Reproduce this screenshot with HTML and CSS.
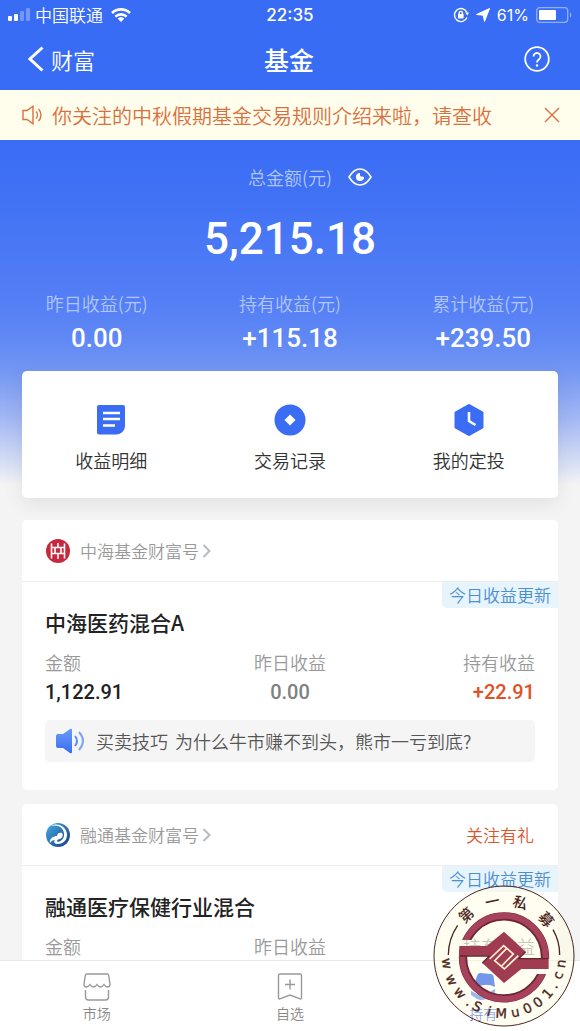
FILE: index.html
```html
<!DOCTYPE html>
<html lang="zh-CN">
<head>
    <meta charset="utf-8">
    <meta name="viewport" content="width=device-width, initial-scale=1">
    <title>基金</title>
    <link rel="stylesheet" href="styles.css">
</head>
<body>
    <div class="app">
        <header class="top">
            <div class="status-bar">
                <div class="status-left">
                    <svg class="signal" width="23" height="14" viewBox="0 0 23 14" fill="#fff">
                        <rect x="0" y="8" width="4" height="5" rx="1"/>
                        <rect x="6" y="6" width="4" height="7" rx="1"/>
                        <rect x="12" y="3" width="4" height="10" rx="1" opacity=".3"/>
                        <rect x="18" y="0" width="4" height="13" rx="1" opacity=".3"/>
                    </svg>
                    <span class="carrier">中国联通</span>
                    <svg width="20" height="14" viewBox="0 0 20 14" fill="none" stroke="#fff" stroke-width="2.6">
                        <path d="M1 5a13 13 0 0 1 18 0"/>
                        <path d="M4.300 8.600a8.300 8.300 0 0 1 11.400 0"/>
                        <path d="M10 14l-3.400-3.400a5 5 0 0 1 6.800 0z" fill="#fff" stroke="none"/>
                    </svg>
                </div>
                <span class="clock">22:35</span>
                <div class="status-right">
                    <svg width="16" height="16" viewBox="0 0 16 16" fill="none" stroke="#fff" stroke-width="1.400">
                        <path d="M13.800 5.200A6.500 6.500 0 1 0 14 10.500"/>
                        <path d="M12 5.500h4l-1.500 3z" fill="#fff" stroke="none"/>
                        <rect x="5" y="7" width="5.600" height="4.400" rx=".6" fill="#fff" stroke="none"/>
                        <path d="M6.200 7.200V6a1.600 1.600 0 0 1 3.200 0v1.200"/>
                    </svg>
                    <svg width="14" height="14" viewBox="0 0 14 14" fill="#fff">
                        <path d="M13.500.5L8.500 13.500 7.200 7.200.5 6.500z" stroke="#fff" stroke-linejoin="round"/>
                    </svg>
                    <span>61%</span>
                    <svg width="36" height="16" viewBox="0 0 36 16">
                        <rect x=".7" y=".7" width="31" height="14.600" rx="3" fill="none" stroke="#fff" stroke-opacity=".45" stroke-width="1.300"/>
                        <rect x="3" y="3" width="17" height="10" rx="1" fill="#fff"/>
                        <path d="M34 5.500a3 3 0 0 1 0 5z" fill="#fff" opacity=".5"/>
                    </svg>
                </div>
            </div>
            <nav class="nav-bar">
                <a class="back" href="#">
                    <svg width="16" height="26" viewBox="0 0 16 26" fill="none" stroke="#fff" stroke-width="3"><path d="M14.500 1.500L2 13l12.500 11.500"/></svg>
                    财富
                </a>
                <h1>基金</h1>
                <button class="help" type="button" aria-label="帮助">
                    <svg width="26" height="26" viewBox="0 0 26 26" fill="none" stroke="#fff" stroke-width="1.800">
                        <circle cx="13" cy="13" r="11.800"/>
                        <path d="M9.500 10.500a3.500 3.500 0 1 1 5.600 2.800c-1.500 1-2.100 1.500-2.100 3.200"/>
                        <circle cx="13" cy="19.500" r="1.200" fill="#fff" stroke="none"/>
                    </svg>
                </button>
            </nav>
        </header>

        <div class="notice">
            <svg width="22" height="20" viewBox="0 0 22 20" fill="none" stroke="#d8703f" stroke-width="1.400">
                <path d="M1 5.500h4l6-4.300v17.600l-6-4.300H1z"/>
                <path d="M14 6.500a5 5 0 0 1 0 7M16.500 4a8.500 8.500 0 0 1 0 12"/>
            </svg>
            <p>你关注的中秋假期基金交易规则介绍来啦，请查收</p>
            <button type="button" aria-label="关闭">
                <svg width="16" height="16" viewBox="0 0 16 16" stroke="#d8703f" stroke-width="1.400"><path d="M1 1l14 14M15 1L1 15"/></svg>
            </button>
        </div>

        <main class="content">
            <section class="summary">
                <div class="total-label">
                    <span>总金额(元)</span>
                    <button type="button" aria-label="隐藏金额">
                        <svg width="24" height="18" viewBox="0 0 24 18" fill="none" stroke="#fff" stroke-width="1.600">
                            <path d="M1 9C4 4 7.500 1 12 1s8 3 11 8c-3 5-6.500 8-11 8S4 14 1 9z"/>
                            <path d="M12 5a4 4 0 1 0 4 4l-2.200-.5a1.500 1.500 0 0 1-1.800-1.500z" fill="#fff" stroke="none"/>
                        </svg>
                    </button>
                </div>
                <div class="total">5,215.18</div>
                <dl class="stats">
                    <div><dt>昨日收益(元)</dt><dd>0.00</dd></div>
                    <div><dt>持有收益(元)</dt><dd>+115.18</dd></div>
                    <div><dt>累计收益(元)</dt><dd>+239.50</dd></div>
                </dl>
            </section>

            <section class="shortcuts">
                <a href="#">
                    <svg width="32" height="32" viewBox="0 0 32 32">
                        <path d="M4 1h24a2 2 0 0 1 2 2v19a8.500 8.500 0 0 1-8.500 8.500H4a2 2 0 0 1-2-2V3a2 2 0 0 1 2-2z" fill="#3a6cf4"/>
                        <path d="M8 9h17M8 15h17M8 21.500h12" stroke="#fff" stroke-width="2.600"/>
                    </svg>
                    收益明细
                </a>
                <a href="#">
                    <svg width="32" height="32" viewBox="0 0 32 32">
                        <circle cx="16" cy="16" r="15.500" fill="#3a6cf4"/>
                        <path d="M16 10.500l5.500 5.500-5.500 5.500-5.500-5.500z" fill="#fff"/>
                    </svg>
                    交易记录
                </a>
                <a href="#">
                    <svg width="32" height="32" viewBox="0 0 32 32">
                        <path d="M16 1.500l13 7.300v14.400l-13 7.300-13-7.300V8.800z" fill="#3a6cf4" stroke="#3a6cf4" stroke-width="3" stroke-linejoin="round"/>
                        <path d="M16 8v9l6.500 4" fill="none" stroke="#fff" stroke-width="2.600"/>
                    </svg>
                    我的定投
                </a>
            </section>

            <article class="fund">
                <header class="fund-head">
                    <a href="#">
                        <svg class="logo" width="24" height="24" viewBox="0 0 24 24">
                            <circle cx="12" cy="12" r="12" fill="#c8283c"/>
                            <path d="M5.500 4.500v15M18.500 4.500v15M5.500 8.500h13M5.500 14.500h13M12 4v4.500M12 14.500V20M9 8.500v6M15 8.500v6" fill="none" stroke="#fff" stroke-width="1.600"/>
                        </svg>
                        中海基金财富号
                        <svg class="arrow" width="9" height="14" viewBox="0 0 9 14"><path d="M1.500 1l6 6-6 6"/></svg>
                    </a>
                </header>
                <div class="fund-body">
                    <span class="badge">今日收益更新</span>
                    <h2>中海医药混合A</h2>
                    <dl class="figures">
                        <div><dt>金额</dt><dd>1,122.91</dd></div>
                        <div><dt>昨日收益</dt><dd class="muted">0.00</dd></div>
                        <div><dt>持有收益</dt><dd class="up">+22.91</dd></div>
                    </dl>
                    <a class="tip" href="#">
                        <svg width="30" height="26" viewBox="0 0 30 26" fill="none">
                            <defs>
                                <linearGradient id="horn" x1="0" y1="0" x2="0" y2="1">
                                    <stop offset="0" stop-color="#6a9cf5"/>
                                    <stop offset="1" stop-color="#3a6cf4"/>
                                </linearGradient>
                            </defs>
                            <path d="M3 6h5l7-5q2-1 2 1v22q0 2-2 1l-7-5H3q-2 0-2-2V8q0-2 2-2z" fill="url(#horn)"/>
                            <path d="M20 8q4 5 0 10" stroke="#5b8df5" stroke-width="2"/>
                            <path d="M24 4q8 9 0 18" stroke="#7fa6f5" stroke-width="2"/>
                        </svg>
                        <span>买卖技巧</span>
                        <span>为什么牛市赚不到头，熊市一亏到底?</span>
                    </a>
                </div>
            </article>

            <article class="fund">
                <header class="fund-head">
                    <a href="#">
                        <svg class="logo" width="24" height="24" viewBox="0 0 24 24">
                            <defs>
                                <linearGradient id="wave" x1="0" y1="0" x2="1" y2="1">
                                    <stop offset="0" stop-color="#45aee2"/>
                                    <stop offset="1" stop-color="#163a86"/>
                                </linearGradient>
                            </defs>
                            <circle cx="12" cy="12" r="12" fill="url(#wave)"/>
                            <path d="M5 3C12-1 21 4 21 12c0 6-5 9-9 9-3 0-5-2-3-4-2 0-4 1-5 3-1-4 3-7 7-7 0-2 2-4 5-3 2 2 0 5-2 6-2 0-3 1-3 2 0 2 6 0 7-5C19 5 12 1 5 3z" fill="#fff"/>
                        </svg>
                        融通基金财富号
                        <svg class="arrow" width="9" height="14" viewBox="0 0 9 14"><path d="M1.500 1l6 6-6 6"/></svg>
                    </a>
                    <a class="follow" href="#">关注有礼</a>
                </header>
                <div class="fund-body">
                    <span class="badge">今日收益更新</span>
                    <h2>融通医疗保健行业混合</h2>
                    <dl class="figures">
                        <div><dt>金额</dt></div>
                        <div><dt>昨日收益</dt></div>
                        <div><dt>持有收益</dt></div>
                    </dl>
                </div>
            </article>
        </main>

        <nav class="tab-bar">
            <a href="#">
                <svg width="28" height="28" viewBox="0 0 28 28" fill="none" stroke="#999" stroke-width="1.400">
                    <path d="M4 1h20q1.500 0 1.700 1.500L27 11q.2 3-2.500 3-2 0-3.500-2.500Q19.500 14 17.500 14T14 11.500Q12.500 14 10.500 14T7 11.500Q5.500 14 3.500 14 .8 14 1 11l1.300-8.500Q2.500 1 4 1z"/>
                    <path d="M2.500 17v7q0 3 3 3h17q3 0 3-3v-7"/>
                </svg>
                市场
            </a>
            <a href="#">
                <svg width="28" height="28" viewBox="0 0 28 28" fill="none" stroke="#999" stroke-width="1.400">
                    <path d="M4 1h20q1.500 0 1.500 1.500v22q0 2-2 1.200L14 22l-9.500 3.700q-2 .8-2-1.200v-22Q2.500 1 4 1z"/>
                    <path d="M14 6.500v10M9 11.500h10"/>
                </svg>
                自选
            </a>
            <a class="active" href="#">
                <svg width="28" height="28" viewBox="0 0 28 28" fill="#0044f0">
                    <path d="M11 0l11 1q2 .5 2.500 2l1.500 11q-9-5-20 1-2-1-1-3l3-9q1-3 3-3z"/>
                    <path d="M2 18l6 3q5 2 9 0l9-5v4l-9 6q-5 2-9 0l-6-4z" opacity=".7"/>
                </svg>
                持有
            </a>
        </nav>

        <svg class="stamp" viewBox="37 40 426 426" role="img" aria-label="第一私募">
            <defs>
                <path id="arcTop" d="M99 253a151 151 0 0 1 302 0"/>
                <path id="arcBottom" d="M64 253a186 186 0 0 0 372 0"/>
                <clipPath id="upper"><path d="M100 100h300v162H300v-57H100z"/></clipPath>
                <clipPath id="lower"><path d="M100 223h100v84h200v110H100z"/></clipPath>
            </defs>
            <circle cx="250" cy="253" r="210" fill="#fffce0" fill-opacity=".45" stroke="#4a2620" stroke-width="3"/>
            <path d="M83 250q0-48 28-89M417 250q0-42-20-76" fill="none" stroke="#4a2620" stroke-width="4"/>
            <g fill="none" stroke="#6d2736" stroke-width="25">
                <circle cx="250" cy="257" r="123" clip-path="url(#upper)"/>
                <circle cx="250" cy="257" r="123" clip-path="url(#lower)"/>
            </g>
            <g fill="none" stroke="#a8425a" stroke-width="18">
                <circle cx="250" cy="257" r="125" clip-path="url(#upper)"/>
                <circle cx="250" cy="257" r="125" clip-path="url(#lower)"/>
            </g>
            <path d="M116 223h82l52-43 65 60-22 22h91v30h-82l-52 42-65-60 22-22h-91z" fill="#a03c52"/>
            <path d="M118 253h90M382 261h-90M315 240l-22 22M185 274l22-22" fill="none" stroke="#642532" stroke-width="4"/>
            <path d="M207 262l42-40 29 25-36 37M293 252l-42 40-29-25 36-37" fill="none" stroke="#fff1cf" stroke-width="5"/>
            <text class="stamp-name" x="103 183 260 344"><textPath href="#arcTop">第一私募</textPath></text>
            <text class="stamp-url" x="8 63 113 166 189 238 266 316 358 397 439 478 509 546"><textPath href="#arcBottom">www.SiMu001.cn</textPath></text>
        </svg>
    </div>
</body>
</html>
```

FILE: styles.css
```css
* {
    box-sizing: border-box;
}

body {
    margin: 0;
    font-family: "Noto Sans CJK SC", sans-serif;
    font-weight: 350;
    font-size: 18px;
    color: #333;
    background: #f4f4f4;
}

h1, h2, p, dl, dd {
    margin: 0;
}

a {
    color: inherit;
    text-decoration: none;
}

button {
    display: flex;
    padding: 0;
    border: none;
    background: none;
    cursor: pointer;
}

svg {
    flex-shrink: 0;
}

.app {
    display: flex;
    flex-direction: column;
    height: 100vh;
    position: relative;
}

/* status bar + title */
.top {
    background: #396cf4;
    color: #fff;
}

.status-bar {
    display: grid;
    grid-template-columns: 1fr auto 1fr;
    align-items: center;
    height: 30px;
    padding: 0 8px;
    font-size: 17px;
    line-height: 24px;
}

.status-left,
.status-right {
    display: flex;
    align-items: center;
    gap: 8px;
}

.status-left .signal {
    margin-right: -4px;
}

.clock {
    font-family: Inter, sans-serif;
    font-weight: 500;
}

.status-right {
    justify-content: flex-end;
    gap: 7px;
    font-family: Inter, sans-serif;
    font-size: 16px;
    font-weight: 400;
}

.nav-bar {
    display: grid;
    grid-template-columns: 1fr auto 1fr;
    align-items: center;
    height: 60px;
    padding: 0 30px 3px 28px;
}

.back {
    display: flex;
    align-items: center;
    gap: 7px;
    font-size: 22px;
}

.nav-bar h1 {
    font-size: 25px;
    font-weight: 500;
    line-height: 36px;
}

.help {
    justify-self: end;
}

.notice {
    display: flex;
    align-items: center;
    gap: 8px;
    height: 50px;
    padding: 0 20px 0 22px;
    background: #fffdeb;
    color: #d8703f;
    font-size: 20px;
}

.notice p {
    flex: 1;
    white-space: nowrap;
}

.content {
    flex: 1;
    min-height: 0;
    overflow-y: auto;
    scrollbar-width: none;
    background: linear-gradient(#3a6cf5 0, #4172f5 60px, #557ff5 165px, #6089f4 200px, #7396f3 230px, #a4b9f4 280px, #d3dcf5 320px, #f4f4f4 345px) no-repeat 0 0 / 100% 345px;
}

.summary {
    padding-top: 24px;
    text-align: center;
    color: #fff;
}

.total-label {
    display: flex;
    align-items: center;
    justify-content: center;
    gap: 16px;
    padding-left: 40px;
    line-height: 26px;
}

.total-label span,
.stats dt {
    color: #b0c6fb;
}

.total {
    margin: 21px 0 24px;
    font-family: Roboto, sans-serif;
    font-size: 44px;
    font-weight: 500;
    line-height: 56px;
}

.stats {
    display: grid;
    grid-template-columns: repeat(3, 1fr);
}

.stats dt {
    line-height: 24px;
}

.stats dd {
    margin-top: 8px;
    font-family: Roboto, sans-serif;
    font-size: 26px;
    font-weight: 500;
    line-height: 30px;
}

.shortcuts {
    display: grid;
    grid-template-columns: repeat(3, 1fr);
    margin: 18px 22px 22px;
    padding: 33px 0 26px;
    border-radius: 5px;
    background: #fff;
    box-shadow: 0 6px 20px rgba(0, 0, 0, 0.08);
}

.shortcuts a {
    display: flex;
    flex-direction: column;
    align-items: center;
    gap: 12px;
    line-height: 24px;
}

/* fund cards */
.fund {
    margin: 0 22px 14px;
    border-radius: 5px;
    background: #fff;
}

.fund-head {
    display: flex;
    align-items: center;
    justify-content: space-between;
    height: 62px;
    padding: 0 24px;
    border-bottom: 1px solid #eee;
    font-size: 17px;
    color: #999;
}

.fund-head a {
    display: flex;
    align-items: center;
}

.logo {
    margin-right: 10px;
}

.arrow {
    margin-left: 3px;
    fill: none;
    stroke: #bbb;
    stroke-width: 2;
}

.fund-head .follow {
    color: #d9562b;
}

.fund-body {
    position: relative;
    padding: 25px 23px 28px;
}

.badge {
    position: absolute;
    top: 0;
    right: 0;
    padding: 0 7px;
    border-radius: 0 0 0 5px;
    background: #e8f4fc;
    color: #4a8fd0;
    font-size: 17px;
    line-height: 26px;
}

.fund h2 {
    font-size: 21px;
    font-weight: 500;
    line-height: 30px;
    color: #222;
}

.figures {
    display: grid;
    grid-template-columns: repeat(3, 1fr);
    margin-top: 13px;
    line-height: 24px;
    text-align: center;
}

.figures div:first-child {
    text-align: left;
}

.figures div:last-child {
    text-align: right;
}

.figures dt {
    color: #999;
}

.figures dd {
    margin-top: 6px;
    font-family: Roboto, sans-serif;
    font-size: 20px;
    font-weight: 500;
    color: #222;
}

.figures .muted {
    color: #808080;
}

.figures .up {
    color: #dd5226;
}

.tip {
    display: flex;
    align-items: center;
    gap: 7px;
    height: 42px;
    margin-top: 16px;
    padding: 0 10px;
    border-radius: 5px;
    background: #f5f5f5;
    color: #555;
    white-space: nowrap;
}

.tip svg {
    margin-right: 4px;
}

.tab-bar {
    display: grid;
    grid-template-columns: repeat(3, 1fr);
    height: 71px;
    border-top: 1px solid #e6e6e6;
    background: #fff;
}

.tab-bar a {
    display: flex;
    flex-direction: column;
    align-items: center;
    gap: 2px;
    padding-top: 12px;
    font-size: 14px;
    line-height: 20px;
    color: #888;
}

.tab-bar .active {
    color: #2f66f2;
}

/* round stamp over the corner */
.stamp {
    position: absolute;
    right: 5px;
    bottom: 4px;
    width: 142px;
    height: 142px;
}

.stamp-name {
    font-size: 44px;
    font-weight: 500;
    fill: #4a2620;
}

.stamp-url {
    font-family: "DejaVu Sans", sans-serif;
    font-size: 40px;
    font-weight: 400;
    fill: #4a2620;
    stroke: #4a2620;
    stroke-width: 1px;
}
```
